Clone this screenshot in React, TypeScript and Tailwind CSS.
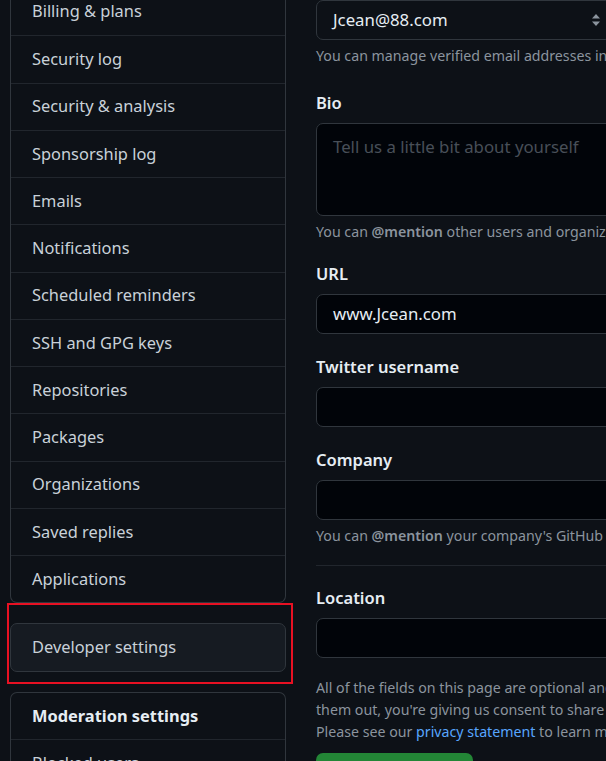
import { ReactNode } from 'react'

const font = { fontFamily: '"Noto Sans", "Open Sans", sans-serif' }

const menuItems = [
  'Billing & plans',
  'Security log',
  'Security & analysis',
  'Sponsorship log',
  'Emails',
  'Notifications',
  'Scheduled reminders',
  'SSH and GPG keys',
  'Repositories',
  'Packages',
  'Organizations',
  'Saved replies',
  'Applications',
]

function Field({ label, children, gap }: { label: string; children: ReactNode; gap: string }) {
  return (
    <div className={gap}>
      <div className="h-[26px] leading-[26px] text-[16.5px] font-semibold text-[#e6edf3]">{label}</div>
      <div className="mt-[7px]">{children}</div>
    </div>
  )
}

function TextInput({ value }: { value?: string }) {
  return (
    <div className="h-[40px] rounded-[7px] border border-[#30363d] bg-[#010409] px-[16px] flex items-center text-[16.8px] text-[#e6edf3]">
      {value}
    </div>
  )
}

function Hint({ children }: { children: ReactNode }) {
  return <p className="mt-[5px] h-[22px] leading-[22px] text-[14.2px] text-[#8b949e] whitespace-nowrap">{children}</p>
}

export default function App() {
  return (
    <div className="h-[761px] w-[606px] overflow-hidden bg-[#0d1117] flex" style={font}>
      {/* sidebar */}
      <aside className="ml-[10px] w-[276px] shrink-0 -mt-[12px]">
        <nav className="rounded-b-[7px] border border-t-0 border-[#30363d] text-[16.4px] text-[#c9d1d9]">
          {menuItems.map((item, i) => (
            <div
              key={item}
              className={`h-[47.25px] flex items-center pl-[21px] ${i > 0 ? 'border-t border-[#21262d]' : ''}`}
            >
              {item}
            </div>
          ))}
        </nav>

        <div className="relative mt-[20px]">
          <div className="h-[49px] rounded-[7px] border border-[#30363d] bg-[#161b22] flex items-center pl-[21px] text-[16.4px] text-[#c9d1d9]">
            Developer settings
          </div>
          <div className="absolute -left-[3px] -top-[20px] -right-[7px] -bottom-[12px] border-2 border-[#e81123] pointer-events-none" />
        </div>

        <div className="mt-[20px] rounded-t-[7px] border border-b-0 border-[#30363d] text-[16.4px] text-[#c9d1d9]">
          <div className="h-[47px] flex items-center pl-[21px] font-bold text-[#e6edf3] border-b border-[#21262d]">
            Moderation settings
          </div>
          <div className="h-[47px] flex items-center pl-[21px]">Blocked users</div>
        </div>
      </aside>

      {/* profile form */}
      <main className="ml-[30px] w-[420px] shrink-0">
        <div className="h-[40px] w-[296px] rounded-[7px] border border-[#30363d] bg-[#0d1117] pl-[16px] pr-[10px] flex items-center justify-between text-[16.8px] text-[#e6edf3]">
          <span>Jcean@88.com</span>
          <svg width="10" height="14" viewBox="0 0 10 14">
            <path d="M5 1 L9 5.5 H1 Z" fill="#8b949e" />
            <path d="M5 13 L9 8.5 H1 Z" fill="#8b949e" />
          </svg>
        </div>
        <Hint>You can manage verified email addresses in your email settings.</Hint>

        <Field label="Bio" gap="mt-[23px]">
          <div className="h-[93px] rounded-[7px] border border-[#30363d] bg-[#010409] px-[16px] pt-[10px] text-[16.8px] text-[#484f58]">
            Tell us a little bit about yourself
          </div>
        </Field>
        <Hint>
          You can <span className="font-semibold">@mention</span> other users and organizations to link to them.
        </Hint>

        <Field label="URL" gap="mt-[18px]">
          <TextInput value="www.Jcean.com" />
        </Field>

        <Field label="Twitter username" gap="mt-[20px]">
          <TextInput />
        </Field>

        <Field label="Company" gap="mt-[20px]">
          <TextInput />
        </Field>
        <Hint>
          You can <span className="font-semibold">@mention</span> your company's GitHub organization to link it.
        </Hint>

        <div className="mt-[18px] border-t border-[#21262d]" />

        <Field label="Location" gap="mt-[19px]">
          <TextInput />
        </Field>

        <p className="mt-[19px] leading-[22px] text-[14.2px] text-[#8b949e] whitespace-nowrap">
          All of the fields on this page are optional and can be deleted at any time, and by filling
          <br />
          them out, you're giving us consent to share this data wherever your user profile appears.
          <br />
          Please see our <span className="text-[#58a6ff]">privacy statement</span> to learn more about how we use this information.
        </p>

        <div className="mt-[10px] h-[40px] w-[157px] rounded-[7px] bg-[#238636]" />
      </main>
    </div>
  )
}
